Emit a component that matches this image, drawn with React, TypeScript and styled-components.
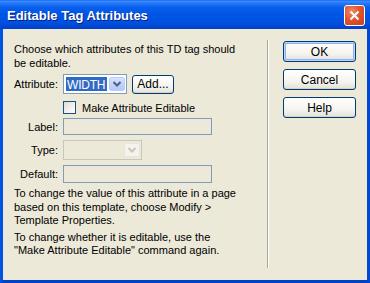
import React from "react";
import styled, { createGlobalStyle } from "styled-components";

const Global = createGlobalStyle`
  html, body { margin: 0; padding: 0; background: #ece9d8; }
  body { font-family: "Liberation Sans", Arial, sans-serif; font-size: 11px; color: #000; }
  * { box-sizing: border-box; }
`;

const Window = styled.div`
  width: 370px;
  height: 283px;
  display: flex;
  flex-direction: column;
  overflow: hidden;
`;

const TitleBar = styled.div`
  height: 29px;
  flex: none;
  display: flex;
  align-items: center;
  justify-content: space-between;
  padding: 0 5px 0 7px;
  background: linear-gradient(
    to bottom,
    #0a5fe8 0px,
    #3d8cff 1px,
    #2a7af8 3px,
    #0860ee 7px,
    #0055e5 14px,
    #0052e0 22px,
    #0047d4 26px,
    #0041c8 29px
  );
`;

const Title = styled.span`
  color: #fff;
  font-family: "Liberation Sans", Arial, sans-serif;
  font-weight: bold;
  font-size: 13px;
  text-shadow: 1px 1px 0 #0a1e78;
  padding-top: 1px;
`;

const CloseButton = styled.div`
  width: 21px;
  height: 21px;
  border: 1px solid #fff;
  border-radius: 3px;
  background: radial-gradient(circle at 35% 30%, #f08a6a 0%, #e0552f 45%, #c93b14 100%);
  display: flex;
  align-items: center;
  justify-content: center;
  margin-top: 1px;
`;

const Frame = styled.div`
  flex: 1;
  display: flex;
  border-left: 3px solid #0052e0;
  border-right: 3px solid #0047d4;
  border-bottom: 3px solid #0041c8;
  background: #ece9d8;
`;

const LeftPanel = styled.div`
  width: 264px;
  padding: 14px 0 0 11px;
  display: flex;
  flex-direction: column;
`;

const Para = styled.p<{ $mt?: number }>`
  margin: ${(p) => p.$mt ?? 0}px 0 0 0;
  line-height: 13.5px;
  width: 224px;
`;

const FormRow = styled.div<{ $mt: number; $h: number }>`
  display: flex;
  align-items: center;
  margin-top: ${(p) => p.$mt}px;
  height: ${(p) => p.$h}px;
`;

const FieldLabel = styled.span`
  width: 44px;
  text-align: right;
  margin-right: 5px;
  flex: none;
  color: #000;
`;

const Select = styled.div<{ $w: number; $disabled?: boolean }>`
  width: ${(p) => p.$w}px;
  height: 20px;
  border: 1px solid ${(p) => (p.$disabled ? "#c9c7ba" : "#7f9db9")};
  background: ${(p) => (p.$disabled ? "#ece9d8" : "#fff")};
  display: flex;
  align-items: stretch;
  padding: 2px 1px 2px 2px;
`;

const SelectValue = styled.div<{ $selected?: boolean }>`
  flex: 1;
  background: ${(p) => (p.$selected ? "#316ac5" : "transparent")};
  color: #fff;
  font-size: 12px;
  letter-spacing: -0.2px;
  line-height: 16px;
  padding-left: 1px;
  margin-right: 2px;
  overflow: hidden;
  white-space: nowrap;
`;

const DropButton = styled.div<{ $disabled?: boolean }>`
  width: 16px;
  flex: none;
  border-radius: 2px;
  background: ${(p) =>
    p.$disabled
      ? "#f4f3ee"
      : "linear-gradient(to bottom, #d9e5fd 0%, #c1d3fb 50%, #b5c9f8 100%)"};
  border: 1px solid ${(p) => (p.$disabled ? "#e8e6dc" : "#b9cdfa")};
  display: flex;
  align-items: center;
  justify-content: center;
`;

const Button = styled.button<{ $w: number; $h: number; $default?: boolean }>`
  width: ${(p) => p.$w}px;
  height: ${(p) => p.$h}px;
  padding: 0;
  font-family: "Liberation Sans", Arial, sans-serif;
  font-size: 12px;
  color: #000;
  border: 1px solid #003c74;
  border-radius: 3px;
  background: linear-gradient(to bottom, #ffffff 0%, #f5f4ef 60%, #e3e1d6 100%);
  box-shadow: ${(p) =>
    p.$default
      ? "inset 0 0 0 1px #bed3f8, inset 0 0 0 2px #8db2f0"
      : "inset 0 -1px 0 #d6d0c5"};
  display: flex;
  align-items: center;
  justify-content: center;
  flex: none;
`;

const AddButton = styled(Button)`
  margin-left: 5px;
`;

const CheckRow = styled.div`
  display: flex;
  align-items: center;
  margin-top: 7px;
  margin-left: 49px;
  height: 13px;
`;

const CheckBox = styled.div`
  width: 13px;
  height: 13px;
  border: 1px solid #1c5180;
  background: linear-gradient(135deg, #dcdcd7 0%, #f2f2ef 60%, #ffffff 100%);
  margin-right: 6px;
`;

const TextInput = styled.div<{ $h: number }>`
  width: 149px;
  height: ${(p) => p.$h}px;
  border: 1px solid #7f9db9;
  background: #ece9d8;
`;

const Separator = styled.div`
  width: 2px;
  margin: 11px 0 12px 0;
  border-left: 1px solid #aca899;
  border-right: 1px solid #ffffff;
`;

const RightPanel = styled.div`
  padding: 12px 0 0 14px;
  display: flex;
  flex-direction: column;
  gap: 7px;
`;

const Chevron = ({ color }: { color: string }) => (
  <svg width="8" height="6" viewBox="0 0 8 6">
    <path d="M0.5 1 L4 4.5 L7.5 1" fill="none" stroke={color} strokeWidth="2" />
  </svg>
);

export default function App() {
  return (
    <Window>
      <Global />
      <TitleBar>
        <Title>Editable Tag Attributes</Title>
        <CloseButton>
          <svg width="11" height="11" viewBox="0 0 11 11">
            <path d="M1.5 1.5 L9.5 9.5 M9.5 1.5 L1.5 9.5" stroke="#fff" strokeWidth="2" />
          </svg>
        </CloseButton>
      </TitleBar>
      <Frame>
        <LeftPanel>
          <Para>Choose which attributes of this TD tag should be editable.</Para>
          <FormRow $mt={4} $h={20}>
            <FieldLabel>Attribute:</FieldLabel>
            <Select $w={64}>
              <SelectValue $selected>WIDTH</SelectValue>
              <DropButton>
                <Chevron color="#4d6185" />
              </DropButton>
            </Select>
            <AddButton $w={42} $h={19}>Add...</AddButton>
          </FormRow>
          <CheckRow>
            <CheckBox />
            <span>Make Attribute Editable</span>
          </CheckRow>
          <FormRow $mt={4} $h={17}>
            <FieldLabel>Label:</FieldLabel>
            <TextInput $h={17} />
          </FormRow>
          <FormRow $mt={5} $h={20}>
            <FieldLabel>Type:</FieldLabel>
            <Select $w={79} $disabled>
              <SelectValue />
              <DropButton $disabled>
                <Chevron color="#c9c7ba" />
              </DropButton>
            </Select>
          </FormRow>
          <FormRow $mt={5} $h={18}>
            <FieldLabel>Default:</FieldLabel>
            <TextInput $h={18} />
          </FormRow>
          <Para $mt={4}>
            To change the value of this attribute in a page based on this template, choose Modify &gt;
            Template Properties.
          </Para>
          <Para $mt={3}>
            To change whether it is editable, use the "Make Attribute Editable" command again.
          </Para>
        </LeftPanel>
        <Separator />
        <RightPanel>
          <Button $w={73} $h={21} $default>OK</Button>
          <Button $w={73} $h={21}>Cancel</Button>
          <Button $w={73} $h={21}>Help</Button>
        </RightPanel>
      </Frame>
    </Window>
  );
}
